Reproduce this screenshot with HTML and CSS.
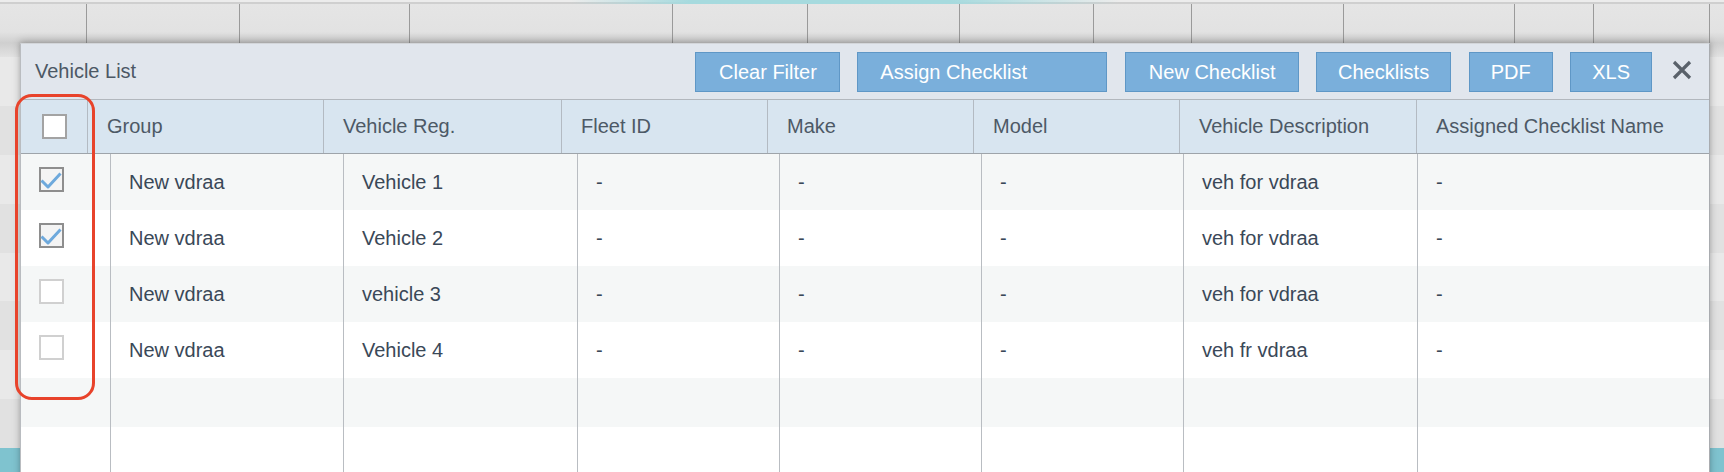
FILE: index.html
```html
<!DOCTYPE html>
<html>
<head>
<meta charset="utf-8">
<title>Vehicle List</title>
<link rel="stylesheet" href="styles.css">
</head>
<body>
<div class="page">
  <div class="bg-top"></div>
  <div class="bg-head">
    <span class="bg-col w87"></span><span class="bg-col w153"></span><span class="bg-col w170"></span><span class="bg-col w263"></span><span class="bg-col w135"></span><span class="bg-col w152"></span><span class="bg-col w134"></span><span class="bg-col w98"></span><span class="bg-col w152"></span><span class="bg-col w171"></span><span class="bg-col w79"></span><span class="bg-col w116"></span>
  </div>
  <div class="bg-rows">
    <div class="bg-row a"></div><div class="bg-row b"></div><div class="bg-row a"></div><div class="bg-row b"></div><div class="bg-row a"></div><div class="bg-row b"></div><div class="bg-row a"></div><div class="bg-row b"></div>
  </div>
  <div class="bg-foot"></div>

  <div class="dialog">
    <div class="dlg-head">
      <span class="dlg-title">Vehicle List</span>
      <div class="dlg-actions">
        <button class="btn btn-pad">Clear Filter</button>
        <button class="btn btn-wide">Assign Checklist</button>
        <button class="btn btn-pad">New Checklist</button>
        <button class="btn">Checklists</button>
        <button class="btn">PDF</button>
        <button class="btn">XLS</button>
        <span class="close" aria-label="Close">
          <svg width="20" height="20" viewBox="0 0 20 20"><path d="M2 2 L18 18 M18 2 L2 18" stroke="#59616a" stroke-width="3.2" stroke-linecap="butt" fill="none"/></svg>
        </span>
      </div>
    </div>

    <div class="thead">
      <div class="th th-check"><span class="cb cb-head"></span></div>
      <div class="th">Group</div>
      <div class="th">Vehicle Reg.</div>
      <div class="th">Fleet ID</div>
      <div class="th">Make</div>
      <div class="th">Model</div>
      <div class="th">Vehicle Description</div>
      <div class="th">Assigned Checklist Name</div>
    </div>

    <div class="tbody">
      <div class="tr odd">
        <div class="td td-check"><span class="cb cb-checked"><svg width="25" height="25" viewBox="0 0 25 25"><path d="M2.5 13.5 L9 20 L21.5 6.5" stroke="#6ea9dc" stroke-width="3" fill="none" stroke-linejoin="round"/></svg></span></div>
        <div class="td">New vdraa</div>
        <div class="td">Vehicle 1</div>
        <div class="td">-</div>
        <div class="td">-</div>
        <div class="td">-</div>
        <div class="td">veh for vdraa</div>
        <div class="td">-</div>
      </div>
      <div class="tr even">
        <div class="td td-check"><span class="cb cb-checked"><svg width="25" height="25" viewBox="0 0 25 25"><path d="M2.5 13.5 L9 20 L21.5 6.5" stroke="#6ea9dc" stroke-width="3" fill="none" stroke-linejoin="round"/></svg></span></div>
        <div class="td">New vdraa</div>
        <div class="td">Vehicle 2</div>
        <div class="td">-</div>
        <div class="td">-</div>
        <div class="td">-</div>
        <div class="td">veh for vdraa</div>
        <div class="td">-</div>
      </div>
      <div class="tr odd">
        <div class="td td-check"><span class="cb"></span></div>
        <div class="td">New vdraa</div>
        <div class="td">vehicle 3</div>
        <div class="td">-</div>
        <div class="td">-</div>
        <div class="td">-</div>
        <div class="td">veh for vdraa</div>
        <div class="td">-</div>
      </div>
      <div class="tr even">
        <div class="td td-check"><span class="cb"></span></div>
        <div class="td">New vdraa</div>
        <div class="td">Vehicle 4</div>
        <div class="td">-</div>
        <div class="td">-</div>
        <div class="td">-</div>
        <div class="td">veh fr vdraa</div>
        <div class="td">-</div>
      </div>
      <div class="tr odd short">
        <div class="td"></div><div class="td"></div><div class="td"></div><div class="td"></div><div class="td"></div><div class="td"></div><div class="td"></div><div class="td"></div>
      </div>
      <div class="tr even filler">
        <div class="td"></div><div class="td"></div><div class="td"></div><div class="td"></div><div class="td"></div><div class="td"></div><div class="td"></div><div class="td"></div>
      </div>
    </div>
  </div>

  <div class="highlight"></div>
</div>
</body>
</html>
```

FILE: styles.css
```css
* { box-sizing: border-box; }

html, body {
  margin: 0;
  padding: 0;
}

body {
  width: 1724px;
  height: 472px;
  overflow: hidden;
  background: #e4e4e4;
  font-family: "Liberation Sans", Arial, Helvetica, sans-serif;
}

.page {
  position: relative;
  width: 1724px;
  height: 472px;
  overflow: hidden;
  display: flex;
  flex-direction: column;
}

/* background application behind the dialog */
.bg-top {
  height: 4px;
  flex: none;
  background:
    linear-gradient(to right, rgba(160, 216, 222, 0) 570px, #a6dade 690px, #a6dade 950px, rgba(160, 216, 222, 0) 1120px),
    linear-gradient(to bottom, #ececec 0, #ececec 2px, #cfcfcf 2px, #cfcfcf 4px);
}

.bg-head {
  height: 53px;
  flex: none;
  display: flex;
  background: linear-gradient(to bottom, #e5e5e5 0, #e2e2e2 28px, #cfcfcf 39px, #e2e2e2 53px);
}

.bg-col {
  height: 100%;
  border-right: 1px solid #9a9a9a;
  flex: none;
}
.w87 { width: 87px; }
.w153 { width: 153px; }
.w170 { width: 170px; }
.w263 { width: 263px; }
.w135 { width: 135px; }
.w152 { width: 152px; }
.w134 { width: 134px; }
.w98 { width: 98px; }
.w171 { width: 171px; }
.w79 { width: 79px; }
.w116 { width: 116px; }

.bg-rows {
  flex: none;
  display: flex;
  flex-direction: column;
}
.bg-row { height: 48.9px; }
.bg-row.a { background: #e9e9e9; }
.bg-row.b { background: #e1e1e1; }

.bg-foot {
  flex: 1;
  background: #7fc3cf;
}

/* dialog window */
.dialog {
  position: absolute;
  left: 20px;
  top: 43px;
  width: 1690px;
  height: 440px;
  background: #ffffff;
  border-left: 1px solid #b9bcc0;
  border-right: 1px solid #a9acb0;
  border-top: 1px solid #d3d6da;
  box-shadow: 0 -2px 8px rgba(0, 0, 0, 0.22), 0 0 4px rgba(0, 0, 0, 0.12);
  display: flex;
  flex-direction: column;
}

.dlg-head {
  height: 56px;
  flex: none;
  display: flex;
  align-items: center;
  padding: 0 17px 0 14px;
  background: #e1e6ed;
  border-bottom: 1px solid #b2b7bd;
}

.dlg-title {
  font-size: 20px;
  color: #4c5865;
}

.dlg-actions {
  margin-left: auto;
  display: flex;
  align-items: center;
  gap: 17.5px;
}

.btn {
  height: 40px;
  padding: 0 21px;
  margin: 0;
  background: #7aafdb;
  border: 1px solid #5f97c6;
  border-radius: 0;
  color: #ffffff;
  font-family: "Liberation Sans", Arial, Helvetica, sans-serif;
  font-size: 20px;
  line-height: 38px;
  text-align: left;
  cursor: pointer;
}

.btn-pad {
  padding: 0 22px 0 23px;
}

.btn-wide {
  width: 250px;
  padding-left: 22px;
}

.close {
  display: flex;
  width: 20px;
  height: 20px;
  margin-left: 2.5px;
  margin-top: -4px;
}

/* table header */
.thead {
  height: 54px;
  flex: none;
  display: grid;
  grid-template-columns: 67px 236px 238px 206px 206px 206px 237px 1fr;
  background: #d8e5f0;
  border-bottom: 1px solid #9ea4aa;
}

.th {
  display: flex;
  align-items: center;
  padding-left: 19px;
  font-size: 20px;
  color: #4d5966;
  border-right: 1px solid #b3bac2;
  white-space: nowrap;
}
.th:last-child { border-right: none; }

.th-check {
  padding-left: 0;
  justify-content: center;
}

/* checkboxes */
.cb {
  display: block;
  width: 25px;
  height: 25px;
  background: #ffffff;
  border: 2px solid #d0d0d0;
  position: relative;
}

.cb-head {
  border-color: #a3a3a3;
}

.cb-checked {
  border-color: #8e8e8e;
  background: #f4f4f4;
}

.cb-checked svg {
  position: absolute;
  left: -2px;
  top: -2px;
}

/* table body */
.tbody {
  flex: 1;
  display: flex;
  flex-direction: column;
}

.tr {
  display: grid;
  grid-template-columns: 90px 233px 234px 202px 202px 202px 234px 1fr;
  height: 56px;
  flex: none;
}
.tr.odd { background: #f5f7f7; }
.tr.even { background: #ffffff; }
.tr.short { height: 49px; }
.tr.filler { flex: 1; }

.td {
  display: flex;
  align-items: center;
  padding-left: 18px;
  font-size: 20px;
  color: #3a4858;
  border-right: 1px solid #b9bdc2;
  white-space: nowrap;
}
.td:last-child { border-right: none; }

.td-check {
  align-items: flex-start;
  padding-top: 13px;
  padding-left: 18px;
}

/* red annotation overlay */
.highlight {
  position: absolute;
  left: 15px;
  top: 94px;
  width: 80px;
  height: 306px;
  border: 3.3px solid #e8432b;
  border-radius: 17px;
}
```
